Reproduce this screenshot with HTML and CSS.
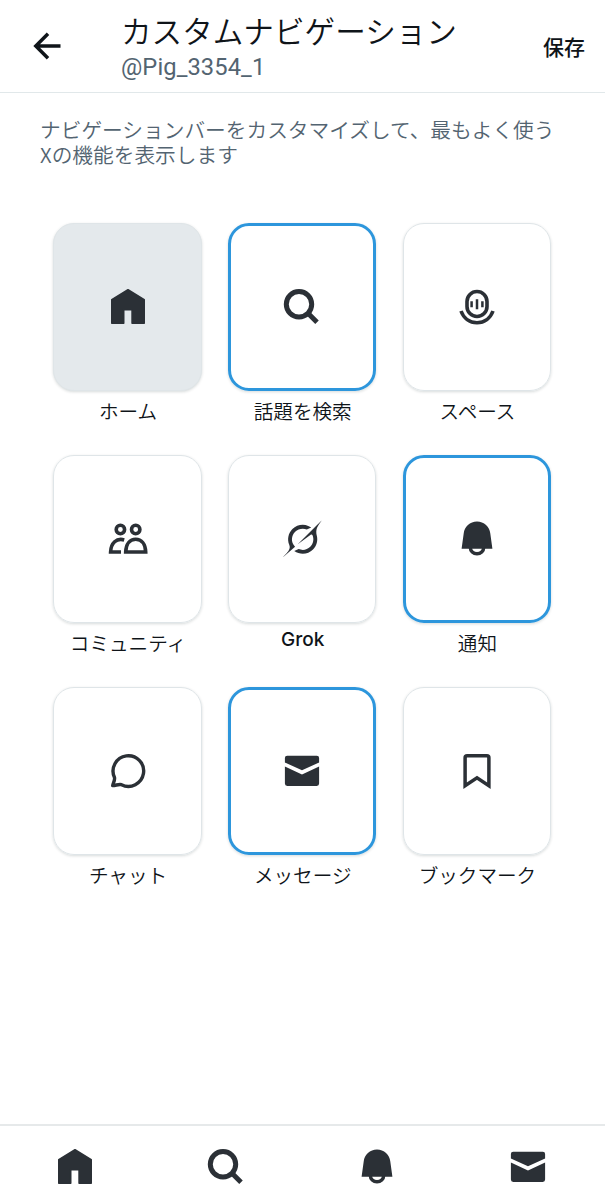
FILE: index.html
```html
<!DOCTYPE html>
<html lang="ja">
<head>
  <meta charset="UTF-8">
  <title>カスタムナビゲーション</title>
  <link rel="stylesheet" href="styles.css">
</head>
<body>

<!-- shared icons -->
<svg class="sprite">
  <symbol id="home" viewBox="0 0 48 48">
    <path d="M24 6.8 40.2 16.7V40.2H28.1V26.8H19.7V40.2H7.8V16.7Z" fill="currentColor" stroke="currentColor" stroke-width="1.6" stroke-linejoin="round"/>
  </symbol>
  <symbol id="search" viewBox="0 0 48 48">
    <g fill="none" stroke="currentColor" stroke-width="5">
      <circle cx="21" cy="21.3" r="12.7"/>
      <path d="M30 30.2 39 39.2"/>
    </g>
  </symbol>
  <symbol id="bell" viewBox="0 0 48 48">
    <path d="M24 6.4C31 6.4 36.7 11.5 37.3 18.5L39.4 33.8H8.6L10.7 18.5C11.3 11.5 17 6.4 24 6.4Z" fill="currentColor"/>
    <path d="M17.3 32.5a6.7 6.3 0 0 0 13.4 0" fill="none" stroke="currentColor" stroke-width="3.4"/>
  </symbol>
  <symbol id="mail" viewBox="0 0 48 48">
    <path d="M6.9 15.6V11a2.3 2.3 0 0 1 2.3-2.3h29.6a2.3 2.3 0 0 1 2.3 2.3v4.6L24 23.3Z" fill="currentColor"/>
    <path d="M6.9 19.6 24 27.4 41.1 19.6v17a2.3 2.3 0 0 1-2.3 2.3H9.2a2.3 2.3 0 0 1-2.3-2.3Z" fill="currentColor"/>
  </symbol>
</svg>

<header class="header">
  <svg class="back" viewBox="0 0 28 28"><path d="M15 1.7 2.8 14 15 26.3M2.8 14H27.5" fill="none" stroke="currentColor" stroke-width="3.5"/></svg>
  <div class="titles">
    <h1>カスタムナビゲーション</h1>
    <div class="user">@Pig_3354_1</div>
  </div>
  <div class="save">保存</div>
</header>

<p class="description">ナビゲーションバーをカスタマイズして、最もよく使うXの機能を表示します</p>

<main class="grid">
  <div class="item">
    <div class="card fixed"><svg class="icon"><use href="#home"/></svg></div>
    <div class="label">ホーム</div>
  </div>
  <div class="item">
    <div class="card selected"><svg class="icon"><use href="#search"/></svg></div>
    <div class="label">話題を検索</div>
  </div>
  <div class="item">
    <div class="card">
      <svg class="icon" viewBox="0 0 48 48" fill="none" stroke="currentColor" stroke-width="3.6">
        <rect x="14" y="8.5" width="20" height="25" rx="10"/>
        <path d="M8 28C10.5 35 16.5 39.7 24 39.7S37.5 35 40 28"/>
        <path d="M18.6 18.3V24.3M24 16.2V26.2M29.4 18.3V24.3" stroke-width="2.5"/>
      </svg>
    </div>
    <div class="label">スペース</div>
  </div>

  <div class="item">
    <div class="card">
      <svg class="icon" viewBox="0 0 48 48" fill="none" stroke="currentColor" stroke-width="3.6">
        <circle cx="16.4" cy="14.5" r="4.2"/>
        <circle cx="31.7" cy="14.5" r="4.2"/>
        <path d="M21.7 37H41.7C41.4 29 37.4 24.2 31.7 24.2S22 29 21.7 37Z"/>
        <path d="M20.2 24.9C12.5 22.7 6.9 28 6.6 37H17"/>
      </svg>
    </div>
    <div class="label">コミュニティ</div>
  </div>
  <div class="item">
    <div class="card">
      <svg class="icon" viewBox="0 0 48 48" fill="currentColor">
        <g transform="translate(4.7 5.5) scale(1.18 1.16)">
          <path d="M12.745 20.54l10.97-8.19c.539-.4 1.307-.244 1.564.38 1.349 3.288.746 7.241-1.938 9.955-2.683 2.714-6.417 3.31-9.83 1.954l-3.728 1.745c5.347 3.697 11.84 2.782 15.898-1.324 3.219-3.255 4.216-7.692 3.284-11.693-1.343-5.87.34-8.218 3.79-13.022L33 0l-4.54 4.59z"/>
          <path d="M10.48 22.531c-3.837-3.707-3.175-9.446.1-12.755 2.42-2.449 6.388-3.448 9.852-1.979l3.72-1.737c-.67-.49-1.53-1.017-2.515-1.387-4.455-1.854-9.789-.931-13.41 2.728-3.483 3.523-4.579 8.94-2.697 13.561 1.405 3.454-.899 5.898-3.22 8.364C1.49 30.2.666 31.074 0 32z"/>
        </g>
      </svg>
    </div>
    <div class="label latin">Grok</div>
  </div>
  <div class="item">
    <div class="card selected"><svg class="icon"><use href="#bell"/></svg></div>
    <div class="label">通知</div>
  </div>

  <div class="item">
    <div class="card">
      <svg class="icon" viewBox="0 0 48 48" fill="none" stroke="currentColor" stroke-width="3.4">
        <path d="M10.5 30.5A15.3 15.3 0 1 1 17.5 37.7C14.5 37 12 38.5 8.7 38.6 9 36 11.1 33.5 10.5 30.5Z" stroke-linejoin="round"/>
      </svg>
    </div>
    <div class="label">チャット</div>
  </div>
  <div class="item">
    <div class="card selected"><svg class="icon"><use href="#mail"/></svg></div>
    <div class="label">メッセージ</div>
  </div>
  <div class="item">
    <div class="card">
      <svg class="icon" viewBox="0 0 48 48" fill="none" stroke="currentColor" stroke-width="3.5">
        <path d="M12.1 38.7V10.8a2 2 0 0 1 2-2H33.9a2 2 0 0 1 2 2V38.7L24 30.8Z"/>
      </svg>
    </div>
    <div class="label">ブックマーク</div>
  </div>
</main>

<nav class="tabbar">
  <svg class="icon"><use href="#home"/></svg>
  <svg class="icon"><use href="#search"/></svg>
  <svg class="icon"><use href="#bell"/></svg>
  <svg class="icon"><use href="#mail"/></svg>
</nav>

</body>
</html>
```

FILE: styles.css
```css
* {
  box-sizing: border-box;
}
body {
  margin: 0;
  height: 1200px;
  display: flex;
  flex-direction: column;
  background: #fff;
  color: #0f1419;
  font-family: "Noto Sans CJK JP", sans-serif;
  font-weight: 350;
  overflow: hidden;
}
.sprite {
  display: none;
}
.header {
  display: flex;
  align-items: center;
  height: 93px;
  padding: 0 20px 0 33px;
  border-bottom: 1px solid #e1e8ea;
}
.back {
  width: 28px;
  height: 28px;
}
.titles {
  flex: 1;
  margin-left: 60px;
}
h1 {
  margin: 0;
  font-size: 30.6px;
  font-weight: 350;
  line-height: 40px;
  white-space: nowrap;
}
.user {
  padding-top: 1px;
  font-family: Roboto, sans-serif;
  font-size: 23.7px;
  font-weight: 400;
  line-height: 32px;
  letter-spacing: 0.1px;
  color: #536471;
}
.save {
  font-size: 21px;
  font-weight: 500;
  line-height: 30px;
}
.description {
  width: 522px;
  margin: 24px 0 0 40px;
  font-size: 20.7px;
  line-height: 25px;
  color: #536471;
}
.grid {
  display: grid;
  grid-template-columns: repeat(3, 148.5px);
  grid-auto-rows: 232px;
  column-gap: 26.2px;
  margin: 56px 0 0 53.3px;
}
.card {
  display: flex;
  align-items: center;
  justify-content: center;
  height: 168px;
  border: 1px solid #dfe5e8;
  border-radius: 21px;
  box-shadow: 0 1px 3px rgba(0, 30, 30, 0.16);
}
.fixed {
  background: #e4e9ec;
}
.selected {
  border: 3px solid #2d96dc;
}
.icon {
  width: 48px;
  height: 48px;
  color: #2b3036;
}
.label {
  margin-top: 6px;
  font-size: 19.6px;
  line-height: 28px;
  text-align: center;
  text-indent: 1px;
  white-space: nowrap;
}
.latin {
  margin-top: 3px;
  font-family: Inter, sans-serif;
  font-size: 19px;
  font-weight: 500;
}
.tabbar {
  display: flex;
  align-items: center;
  justify-content: space-around;
  height: 76px;
  margin-top: auto;
  padding: 7px 2px 0 0;
  border-top: 2px solid #e6e9ea;
}
```
